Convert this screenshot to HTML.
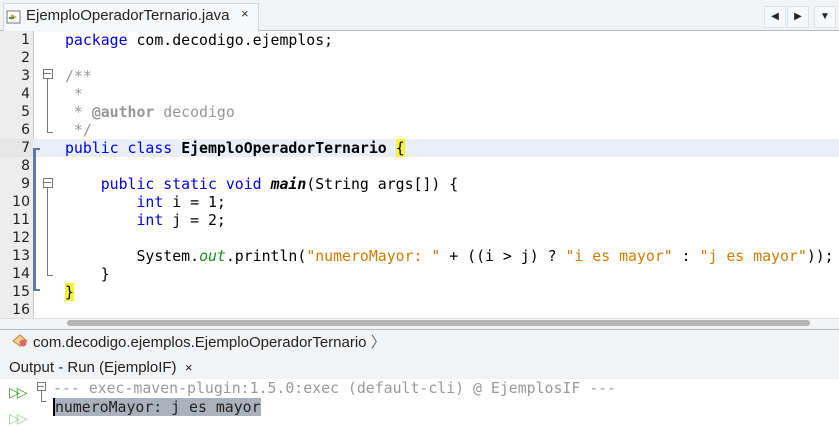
<!DOCTYPE html>
<html><head><style>
body{margin:0;width:839px;height:421px;overflow:hidden;background:#fff;font-family:"Liberation Sans",sans-serif;position:relative}
.abs{position:absolute}
.mono{font-family:"DejaVu Sans Mono","Liberation Mono",monospace;font-size:14.85px;white-space:pre}
.ln{position:absolute;left:0;width:30px;text-align:right;color:#222;font-family:"DejaVu Sans","Liberation Sans",sans-serif;font-size:14px}
.code{position:absolute;left:65px}
.kw{color:#0000e6}
.str{color:#ce7b00}
.cm{color:#969696}
.btn{position:absolute;top:6px;width:20px;height:20px;border:1px solid #dfe1e5;background:#f7f8fa;font-size:10px;color:#222;text-align:center;line-height:20px}
</style></head><body>
<div class="abs" style="left:0;top:0;width:839px;height:30px;background:#f2f3f5;border-bottom:1px solid #b8bcc2"></div>
<div class="abs" style="left:3px;top:3px;width:254px;height:28px;background:#f7f8fa;border:1px solid #d4d7db;border-bottom:none"></div>
<svg class="abs" style="left:6px;top:10px" width="16" height="14"><rect x="1" y="1" width="13" height="12" fill="#fff" stroke="#777"/><path d="M5 4l6 3-6 3z" fill="#e7a23a"/><path d="M3 8h5" stroke="#5b8c3d" stroke-width="2"/></svg>
<div class="abs" style="left:26px;top:7px;font-size:15px;color:#222">EjemploOperadorTernario.java</div>
<div class="abs" style="left:241px;top:6px;font-size:13px;color:#333">×</div>
<div class="btn" style="left:764px">◀</div><div class="btn" style="left:787px">▶</div><div class="btn" style="left:814px">▼</div>

<div class="abs" style="left:0;top:31px;width:33px;height:289px;background:#ededed;border-right:1px solid #c8c8c8"></div>
<div class="abs" style="left:0;top:139px;width:839px;height:18px;background:#e9eff8"></div>
<div class="abs" style="left:0;top:139px;width:33px;height:18px;background:#e6e6e6"></div>
<div class="abs" style="left:33px;top:148px;width:3px;height:143px;background:#5a7ba8"></div>
<div class="abs" style="left:33px;top:148px;width:7px;height:2px;background:#5a7ba8"></div>
<div class="abs" style="left:33px;top:289px;width:7px;height:2px;background:#5a7ba8"></div>
<div class="abs" style="left:43px;top:69px;width:8px;height:8px;border:1px solid #777;background:#fff"></div>
<div class="abs" style="left:44px;top:73px;width:7px;height:1px;background:#777"></div>
<div class="abs" style="left:47px;top:79px;width:1px;height:53px;background:#777"></div>
<div class="abs" style="left:47px;top:132px;width:6px;height:1px;background:#777"></div>
<div class="abs" style="left:43px;top:178px;width:8px;height:8px;border:1px solid #777;background:#fff"></div>
<div class="abs" style="left:44px;top:182px;width:7px;height:1px;background:#777"></div>
<div class="abs" style="left:47px;top:188px;width:1px;height:87px;background:#777"></div>
<div class="abs" style="left:47px;top:275px;width:6px;height:1px;background:#777"></div>

<div class="ln" style="top:32px">1</div><div class="ln" style="top:50px">2</div><div class="ln" style="top:68px">3</div><div class="ln" style="top:86px">4</div><div class="ln" style="top:104px">5</div><div class="ln" style="top:122px">6</div><div class="ln" style="top:140px">7</div><div class="ln" style="top:158px">8</div><div class="ln" style="top:176px">9</div><div class="ln" style="top:194px">10</div><div class="ln" style="top:212px">11</div><div class="ln" style="top:230px">12</div><div class="ln" style="top:248px">13</div><div class="ln" style="top:266px">14</div><div class="ln" style="top:284px">15</div><div class="ln" style="top:302px">16</div>

<div class="mono code" style="top:31px;line-height:18px"><span class="kw">package</span> com.decodigo.ejemplos;

<span class="cm">/**
 *
 * <b>@author</b> decodigo
 */</span>
<span class="kw">public class</span> <b>EjemploOperadorTernario</b> <span style="background:#f6f634">{</span>

    <span class="kw">public static void</span> <b><i>main</i></b>(String args[]) {
        <span class="kw">int</span> i = 1;
        <span class="kw">int</span> j = 2;

        System.<i style="color:#179117">out</i>.println(<span class="str">"numeroMayor: "</span> + ((i &gt; j) ? <span class="str">"i es mayor"</span> : <span class="str">"j es mayor"</span>));
    }
<span style="background:#f6f634">}</span></div>

<div class="abs" style="left:0;top:318px;width:839px;height:11px;background:#f2f3f5;border-top:1px solid #ddd"></div>
<div class="abs" style="left:67px;top:320px;width:743px;height:6px;border-radius:3px;background:#b5b5b5"></div>
<div class="abs" style="left:0;top:329px;width:839px;height:22px;background:#f2f3f5;border-top:1px solid #b8bcc2;border-bottom:1px solid #b8bcc2"></div>
<svg class="abs" style="left:11px;top:332px" width="18" height="16"><path d="M2 9l7-6 7 6-7 5z" fill="#f5d38a" stroke="#b08840"/><circle cx="12" cy="11" r="3.5" fill="#e06a6a"/></svg>
<div class="abs" style="left:33px;top:331px;font-size:15px;color:#222">com.decodigo.ejemplos.EjemploOperadorTernario <span style="color:#666">〉</span></div>
<div class="abs" style="left:0;top:352px;width:839px;height:27px;background:#f2f3f5"></div>
<div class="abs" style="left:9px;top:359px;font-size:15px;color:#222">Output - Run (EjemploIF) &nbsp;<span style="font-size:13px">×</span></div>
<div class="abs" style="left:9px;top:384px;font-size:14px;color:#3a9a1a;letter-spacing:-3px">▷▷</div>
<div class="abs" style="left:9px;top:410px;font-size:14px;color:#3a9a1a;letter-spacing:-3px;opacity:.5">▷▷</div>
<div class="abs" style="left:37px;top:382px;width:7px;height:7px;border:1px solid #777"></div>
<div class="abs" style="left:38px;top:386px;width:6px;height:1px;background:#777"></div>
<div class="abs" style="left:41px;top:390px;width:1px;height:11px;background:#777"></div>
<div class="abs" style="left:41px;top:401px;width:5px;height:1px;background:#777"></div>
<div class="mono abs" style="left:53px;top:379px;color:#999;line-height:18px">--- exec-maven-plugin:1.5.0:exec (default-cli) @ EjemplosIF ---</div>
<div class="mono abs" style="left:53px;top:398px;line-height:18px;background:#a9b1bb;color:#222;border-left:2px solid #000">numeroMayor: j es mayor</div>
</body></html>
